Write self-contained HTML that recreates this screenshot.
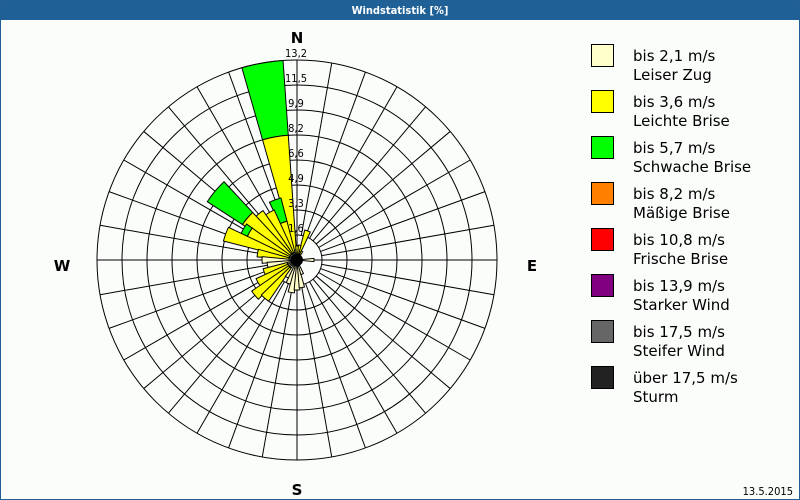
<!DOCTYPE html>
<html><head><meta charset="utf-8"><style>
html,body{margin:0;padding:0;background:#fbfdfb}
#f{position:relative;width:798px;height:498px;border:1px solid #1f5f94;overflow:hidden;background:#fbfdfb;font-family:"DejaVu Sans","Liberation Sans",sans-serif}
#h{height:19px;background:#1f6096;color:#fff;font-size:11px;font-weight:bold;text-align:center;line-height:19px;font-family:"DejaVu Sans Condensed","DejaVu Sans",sans-serif}
</style></head><body><div id="f"><div id="h">Windstatistik [%]</div>
<svg id="s" width="798" height="478" style="position:absolute;left:0;top:20px" xmlns="http://www.w3.org/2000/svg">
<g id="grid" fill="none" stroke="#000" stroke-width="1"></g><g id="bars"></g>
<g font-family="DejaVu Sans Condensed, DejaVu Sans, sans-serif" font-size="11" text-anchor="middle" fill="#000">
<text x="295" y="36">13,2</text><text x="295" y="61">11,5</text><text x="295" y="86">9,9</text><text x="295" y="111">8,2</text><text x="295" y="136">6,6</text><text x="295" y="161">4,9</text><text x="295" y="186">3,3</text><text x="295" y="211">1,6</text>
</g>
<g font-family="DejaVu Sans, sans-serif" font-size="15" font-weight="bold" text-anchor="middle">
<text x="296" y="22">N</text><text x="61" y="250">W</text><text x="531" y="250">E</text><text x="296" y="474">S</text></g>
<g font-family="DejaVu Sans, sans-serif" font-size="15" fill="#000">
<rect x="590.5" y="23.5" width="22" height="22" fill="#ffffcc" stroke="#000"/><text x="632" y="40">bis 2,1 m/s</text><text x="632" y="59">Leiser Zug</text>
<rect x="590.5" y="69.5" width="22" height="22" fill="#ffff00" stroke="#000"/><text x="632" y="86">bis 3,6 m/s</text><text x="632" y="105">Leichte Brise</text>
<rect x="590.5" y="115.5" width="22" height="22" fill="#00ff00" stroke="#000"/><text x="632" y="132">bis 5,7 m/s</text><text x="632" y="151">Schwache Brise</text>
<rect x="590.5" y="161.5" width="22" height="22" fill="#ff8000" stroke="#000"/><text x="632" y="178">bis 8,2 m/s</text><text x="632" y="197">Mäßige Brise</text>
<rect x="590.5" y="207.5" width="22" height="22" fill="#ff0000" stroke="#000"/><text x="632" y="224">bis 10,8 m/s</text><text x="632" y="243">Frische Brise</text>
<rect x="590.5" y="253.5" width="22" height="22" fill="#800080" stroke="#000"/><text x="632" y="270">bis 13,9 m/s</text><text x="632" y="289">Starker Wind</text>
<rect x="590.5" y="299.5" width="22" height="22" fill="#666666" stroke="#000"/><text x="632" y="316">bis 17,5 m/s</text><text x="632" y="335">Steifer Wind</text>
<rect x="590.5" y="345.5" width="22" height="22" fill="#222222" stroke="#000"/><text x="632" y="362">über 17,5 m/s</text><text x="632" y="381">Sturm</text>
</g>
<text x="792" y="474" text-anchor="end" font-family="DejaVu Sans Condensed, DejaVu Sans, sans-serif" font-size="11">13.5.2015</text>
</svg></div>
<script>
var cx=296,cy=239,ns="http://www.w3.org/2000/svg";
var g=document.getElementById('grid'),b=document.getElementById('bars');
function el(p,t,a){var e=document.createElementNS(ns,t);for(var k in a)e.setAttribute(k,a[k]);p.appendChild(e);return e;}
function pt(r,a){a=(a-90)*Math.PI/180;return [cx+r*Math.cos(a),cy+r*Math.sin(a)];}
function wedge(r0,r1,d,c,w){w=w||5.5;var a0=d-w,a1=d+w,p1=pt(r1,a0),p2=pt(r1,a1),p3=pt(r0,a1),p4=pt(r0,a0);
el(b,'path',{d:'M'+p4+'L'+p1+'A'+r1+' '+r1+' 0 0 1 '+p2+'L'+p3+(r0>0?'A'+r0+' '+r0+' 0 0 0 '+p4:'')+'Z',fill:c,stroke:'#000','stroke-width':1});}
for(var i=0;i<36;i++){var a=i*10,p=pt(25,a),q=pt(200,a);el(g,'line',{x1:p[0],y1:p[1],x2:q[0],y2:q[1]});}
el(g,'line',{x1:cx-200,y1:cy,x2:cx+200,y2:cy});el(g,'line',{x1:cx,y1:cy-200,x2:cx,y2:cy+200});
for(var k=1;k<=8;k++)el(g,'circle',{cx:cx,cy:cy,r:25*k});
var D=[[350,10,125,200,6],[340,8,40,64],[330,8,55,0],[320,8,60,0],[310,8,65,107,7],[300,8,55,62],[290,8,76,0],[280,8,40,0],[270,35,0,0],[260,30,0,0],[250,10,35,0],[240,10,45,0],[230,10,55,0],[220,10,50,0],[210,20,0,0],[200,25,0,0],[190,33,0,0],[180,30,0,0],[170,28,0,0],[160,15,0,0],[90,17,0,0],[20,6,31,0],[10,6,15,0],[0,6,14,0],[30,6,10,0]];
D.forEach(function(x){var d=x[0],w=x[4];if(x[3])wedge(x[2]||x[1],x[3],d,'#00ff00',w);if(x[2])wedge(x[1],x[2],d,'#ffff00',w);wedge(0,x[1],d,'#ffffcc',w);});
el(b,'circle',{cx:cx,cy:cy,r:6,fill:'#000'});
</script></body></html>
